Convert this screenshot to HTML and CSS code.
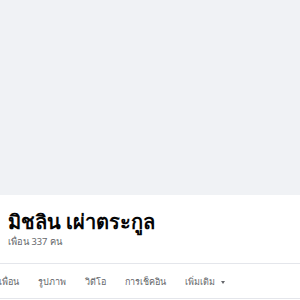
FILE: index.html
```html
<!DOCTYPE html>
<html lang="th">
<head>
    <meta charset="UTF-8">
    <meta name="viewport" content="width=device-width, initial-scale=1.0">
    <title>มิชลิน เผ่าตระกูล</title>
    <link rel="stylesheet" href="styles.css">
</head>
<body>
    <div class="cover"></div>

    <div class="profile">
        <h1 class="name">มิชลิน เผ่าตระกูล</h1>
        <p class="friends">เพื่อน 337 คน</p>
    </div>

    <nav class="tabs">
        <span class="tab">เพื่อน</span>
        <span class="tab">รูปภาพ</span>
        <span class="tab">วิดีโอ</span>
        <span class="tab">การเช็คอิน</span>
        <span class="tab">เพิ่มเติม <span class="caret"></span></span>
    </nav>
</body>
</html>
```

FILE: styles.css
```css
body {
    margin: 0;
    font-family: "Noto Sans", "Liberation Sans", sans-serif;
    background: #fff;
    color: #050505;
    width: 300px;
    height: 300px;
    overflow: hidden;
}
.cover {
    height: 195px;
    background: #f0f2f5;
}
.profile {
    padding: 15px 8px 0;
    height: 69px;
    box-sizing: border-box;
    border-bottom: 1px solid #e4e6eb;
}
.name {
    margin: 0;
    font-size: 20px;
    font-weight: bold;
    line-height: 24px;
}
.friends {
    margin: 2px 0 0;
    font-size: 9.3px;
    color: #65676b;
    line-height: 12px;
}
.tabs {
    display: flex;
    align-items: center;
    height: 35px;
    box-sizing: border-box;
    padding-top: 2px;
    margin-left: -1px;
    gap: 19px;
    border-bottom: 1px solid #e4e6eb;
    font-size: 9px;
    color: #65676b;
}
.caret {
    display: inline-block;
    width: 0;
    height: 0;
    margin-left: 4px;
    border-left: 2.5px solid transparent;
    border-right: 2.5px solid transparent;
    border-top: 3px solid #65676b;
    vertical-align: middle;
}
```
